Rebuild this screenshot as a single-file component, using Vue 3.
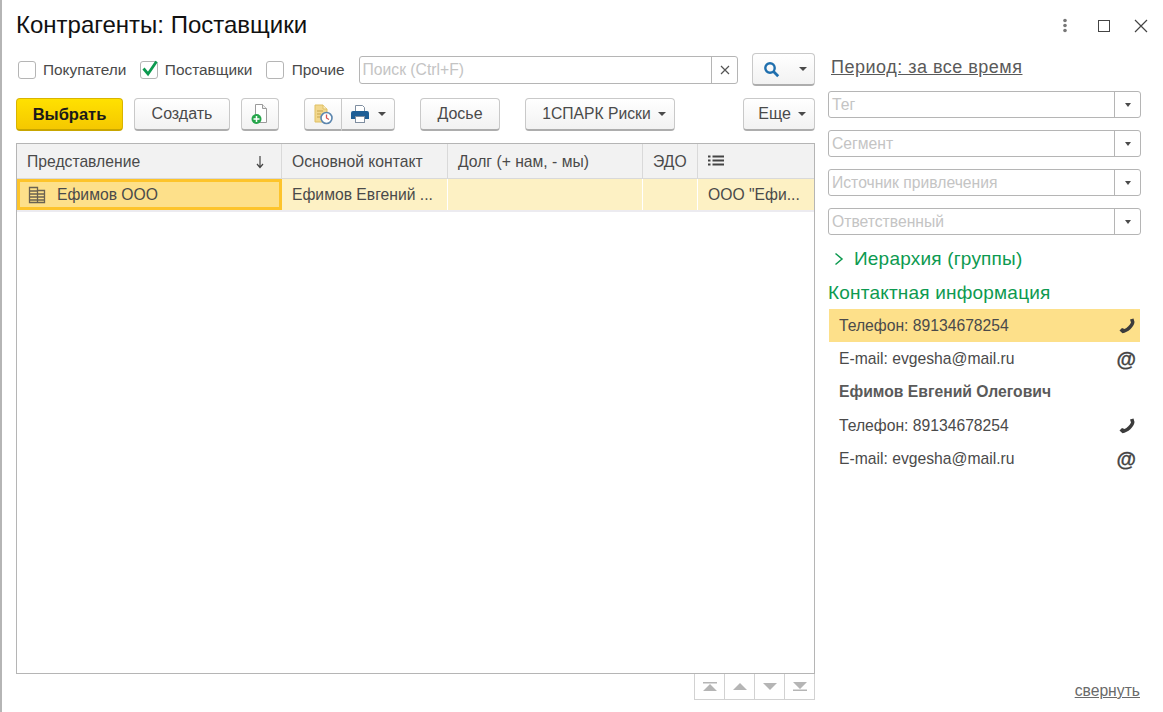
<script setup>
const columns = [
  { name: 'Основной контакт', w: 166 },
  { name: 'Долг (+ нам, - мы)', w: 195 },
  { name: 'ЭДО', w: 55 },
]
const filters = ['Тег', 'Сегмент', 'Источник привлечения', 'Ответственный']
const phonePath = 'M12 2.500L15.500 1.500L16.500 5C16 10 10 15.500 4.500 16.200L1.500 13.500L4 11L6.500 12C9 11 12 8 13 5.500Z'
</script>

<template>
  <div class="window">
    <header class="head">
      <h1 class="title">Контрагенты: Поставщики</h1>
      <div class="controls">
        <svg width="6" height="16" viewBox="0 0 6 16" class="dots"><circle cx="3" cy="2.500" r="1.800" fill="#777"/><circle cx="3" cy="7.500" r="1.800" fill="#777"/><circle cx="3" cy="12.500" r="1.800" fill="#777"/></svg>
        <svg width="12" height="12" viewBox="0 0 12 12" class="square"><rect x=".5" y=".5" width="11" height="11" fill="none" stroke="#444"/></svg>
        <svg width="14" height="14" viewBox="0 0 14 14" class="close"><path d="M1 1l12 12M13 1L1 13" stroke="#444" stroke-width="1.200" fill="none"/></svg>
      </div>
    </header>

    <div class="body">
      <main class="left">
        <div class="row-search">
          <label class="check first"><span class="box"></span>Покупатели</label>
          <label class="check second">
            <span class="box">
              <svg width="20" height="20" viewBox="0 0 20 20" class="tick"><path d="M3.500 9.500l4.500 5.500L16.500 2.500" fill="none" stroke="#0d9a50" stroke-width="2.800"/></svg>
            </span>Поставщики
          </label>
          <label class="check third"><span class="box"></span>Прочие</label>
          <div class="search">
            <span class="search-text">Поиск (Ctrl+F)</span>
            <span class="search-x">
              <svg width="10" height="10" viewBox="0 0 10 10"><path d="M1 1l8 8M9 1L1 9" stroke="#555" stroke-width="1.200"/></svg>
            </span>
          </div>
          <button class="btn search-btn">
            <svg width="17" height="17" viewBox="0 0 17 17"><circle cx="7" cy="7" r="4.700" fill="none" stroke="#1f6fae" stroke-width="2.400"/><path d="M10.500 10.500l4.700 4.700" stroke="#1f6fae" stroke-width="2.800"/></svg>
            <i class="caret"></i>
          </button>
        </div>

        <div class="row-actions">
          <button class="btn primary">Выбрать</button>
          <button class="btn create">Создать</button>
          <button class="btn icon-new">
            <svg width="20" height="22" viewBox="0 0 20 22">
              <path d="M5.500 1.500h7l4 4v14h-11z" fill="#fff" stroke="#9a9a9a"/>
              <path d="M12.500 1.500v4h4" fill="#eee" stroke="#9a9a9a"/>
              <circle cx="6.500" cy="16" r="5" fill="#26a64b"/>
              <path d="M6.500 13v6M3.500 16h6" stroke="#fff" stroke-width="1.500"/>
            </svg>
          </button>
          <div class="group">
            <button class="btn g1">
              <svg width="22" height="22" viewBox="0 0 22 22">
                <path d="M3 2h8l4 4v13H3z" fill="#f2d88e" stroke="#dfc064"/>
                <path d="M11 2v4h4" fill="#f9ecc4" stroke="#dfc064"/>
                <path d="M5 8h6M5 11h4M5 14h3" stroke="#c9a54a"/>
                <circle cx="14.500" cy="15" r="5.500" fill="#fff" stroke="#5c86ae" stroke-width="1.600"/>
                <path d="M14.500 11.500v3.500l2.500 1.500" fill="none" stroke="#d9534f" stroke-width="1.300"/>
              </svg>
            </button>
            <button class="btn g2">
              <svg width="20" height="20" viewBox="0 0 20 20">
                <path d="M5.500 1.500h7l2 2v5h-9z" fill="#fff" stroke="#7f8ea0"/>
                <path d="M1 9q0-2 2-2h14q2 0 2 2v6h-4v-3H5v3H1z" fill="#1f5f96"/>
                <rect x="5.500" y="12.500" width="9" height="6" fill="#fff" stroke="#7f8ea0"/>
              </svg>
              <i class="caret"></i>
            </button>
          </div>
          <button class="btn dossier">Досье</button>
          <button class="btn spark">1СПАРК Риски<i class="caret"></i></button>
          <button class="btn more">Еще<i class="caret"></i></button>
        </div>

        <section class="table">
          <div class="thead">
            <div class="th c-first">Представление
              <svg width="10" height="14" viewBox="0 0 10 14" class="sort"><path d="M5 1v11M2 9l3 3.500L8 9" fill="none" stroke="#444" stroke-width="1.200"/></svg>
            </div>
            <div v-for="c in columns" :key="c.name" class="th" :style="{ width: c.w + 'px' }">{{ c.name }}</div>
            <div class="th c-last">
              <svg width="16" height="12" viewBox="0 0 16 12"><path d="M0 1.500h2.500M0 5.500h2.500M0 9.500h2.500M4.500 1.500H16M4.500 5.500H16M4.500 9.500H16" stroke="#444" stroke-width="1.800"/></svg>
            </div>
          </div>
          <div class="tr">
            <div class="td c-first active">
              <svg width="18" height="18" viewBox="0 0 18 18" class="org">
                <path d="M1.500 1.500h8v15h-8zM9.500 4.500h7v12h-7z" fill="#fde08a" stroke="#6a6252" stroke-width="1.300"/>
                <path d="M1.500 5h8M1.500 8h8M1.500 11h8M1.500 14h8M9.500 8h7M9.500 11h7M9.500 14h7" stroke="#6a6252" stroke-width="1.400"/>
              </svg>
              Ефимов ООО
            </div>
            <div class="td" style="width: 166px">Ефимов Евгений ...</div>
            <div class="td" style="width: 195px"></div>
            <div class="td" style="width: 55px"></div>
            <div class="td c-last">ООО "Ефи...</div>
          </div>
          <div class="tbody-space"></div>
        </section>

        <div class="pager">
          <span class="page"><svg width="14" height="9" viewBox="0 0 14 9"><path d="M0 0h14v1.500H0zM7 2l7 7H0z" fill="#b5b5b5"/></svg></span>
          <span class="page"><svg width="14" height="7" viewBox="0 0 14 7"><path d="M7 0l7 7H0z" fill="#b5b5b5"/></svg></span>
          <span class="page"><svg width="14" height="7" viewBox="0 0 14 7"><path d="M0 0h14L7 7z" fill="#b5b5b5"/></svg></span>
          <span class="page"><svg width="14" height="9" viewBox="0 0 14 9"><path d="M0 0h14L7 7zM0 7.500h14V9H0z" fill="#b5b5b5"/></svg></span>
        </div>
      </main>

      <aside class="right">
        <a class="period">Период: за все время</a>
        <div class="filters">
          <div v-for="f in filters" :key="f" class="select">
            <span class="select-text">{{ f }}</span>
            <span class="select-btn"><i class="caret small"></i></span>
          </div>
        </div>
        <div class="hier">
          <svg width="10" height="14" viewBox="0 0 10 14"><path d="M1.500 1.500L8 7l-6.500 5.500" fill="none" stroke="#0d9a50" stroke-width="1.500"/></svg>
          <span>Иерархия (группы)</span>
        </div>
        <div class="contact-title">Контактная информация</div>
        <ul class="contacts">
          <li class="contact hl">
            <span>Телефон: 89134678254</span>
            <svg width="18" height="18" viewBox="0 0 18 18"><path :d="phonePath" fill="#3c3c3c"/></svg>
          </li>
          <li class="contact">
            <span>E-mail: evgesha@mail.ru</span>
            <span class="at">@</span>
          </li>
          <li class="contact person">Ефимов Евгений Олегович</li>
          <li class="contact">
            <span>Телефон: 89134678254</span>
            <svg width="18" height="18" viewBox="0 0 18 18"><path :d="phonePath" fill="#3c3c3c"/></svg>
          </li>
          <li class="contact">
            <span>E-mail: evgesha@mail.ru</span>
            <span class="at">@</span>
          </li>
        </ul>
        <div class="collapse-wrap"><a class="collapse">свернуть</a></div>
      </aside>
    </div>
  </div>
</template>

<style>
html, body { margin: 0; background: #fff; overflow: hidden; }
</style>

<style scoped>
.window {
  width: 1163px;
  height: 712px;
  box-sizing: border-box;
  border-left: 2px solid #b5b5b5;
  font-family: "Liberation Sans", Arial, sans-serif;
  font-size: 15.700px;
  color: #4a4a4a;
  display: flex;
  flex-direction: column;
  overflow: hidden;
}
.head {
  height: 53px;
  flex: none;
  display: flex;
  justify-content: space-between;
  align-items: flex-start;
  padding: 0 15px 0 14px;
}
.title {
  margin: 11px 0 0;
  font-size: 24px;
  line-height: 28px;
  font-weight: 400;
  color: #111;
}
.controls { display: flex; align-items: center; margin-top: 18px; }
.dots { display: block; margin-right: 30px; }
.square { display: block; margin-right: 24px; }
.close { display: block; }

.body { flex: 1; display: flex; min-height: 0; padding-left: 14px; }
.left { width: 799px; flex: none; display: flex; flex-direction: column; }
.right { width: 313px; margin-left: 13px; flex: none; display: flex; flex-direction: column; }

.row-search { display: flex; align-items: center; height: 33px; padding-left: 2px; }
.check { display: flex; align-items: center; height: 20px; white-space: nowrap; font-size: 15.400px; }
.box {
  width: 18px; height: 18px; box-sizing: border-box;
  border: 1px solid #b5b5b5; border-radius: 3px; background: #fff;
  margin-right: 7px; flex: none; position: relative;
}
.tick { position: absolute; left: -1px; top: -3px; }
.first { width: 122px; }
.second { width: 126px; }
.third { width: 93px; }
.third .box { margin-right: 8px; }
.search {
  width: 380px; height: 28px; box-sizing: border-box;
  border: 1px solid #b5b5b5; border-radius: 3px;
  display: flex; align-items: center; justify-content: space-between;
}
.search-text { color: #c4c4c4; padding: 1px 0 0 3px; }
.search-x {
  width: 25px; height: 100%; border-left: 1px solid #b5b5b5;
  display: flex; align-items: center; justify-content: center;
}

.btn {
  height: 33px; box-sizing: border-box;
  border: 1px solid #c9c9c9; border-bottom: 2px solid #adadad; border-radius: 4px;
  background: linear-gradient(#fff, #f2f2f2);
  font: inherit; font-size: 16px; color: #4a4a4a; padding: 0;
  display: flex; align-items: center; justify-content: center;
  flex: none;
}
.caret {
  display: inline-block; width: 0; height: 0;
  border-left: 4px solid transparent; border-right: 4px solid transparent;
  border-top: 4px solid #4a4a4a;
}
.caret.small { border-left-width: 3.500px; border-right-width: 3.500px; }
.search-btn { width: 63px; margin-left: 14px; justify-content: space-between; padding: 0 7px 0 10px; }

.row-actions { display: flex; margin-top: 12px; height: 33px; }
.primary {
  width: 107px; font-weight: 700; font-size: 16.500px; color: #1a1a1a;
  background: linear-gradient(#ffe100, #f5c800);
  border-color: #d9b400; border-bottom-color: #c8a600;
}
.create { width: 96px; margin-left: 11px; }
.icon-new { width: 38px; margin-left: 11px; }
.group { display: flex; margin-left: 25px; }
.g1 { width: 38px; border-radius: 4px 0 0 4px; border-right: 1px solid #c9c9c9; }
.g2 { width: 53px; border-radius: 0 4px 4px 0; border-left: 0; justify-content: space-between; padding: 0 8px 0 8px; }
.dossier { width: 80px; margin-left: 25px; }
.spark { width: 150px; margin-left: 25px; gap: 7px; padding-left: 8px; font-size: 15.700px; }
.more { width: 72px; margin-left: 68px; gap: 7px; padding-left: 6px; }

.table {
  margin-top: 12px;
  height: 531px; flex: none; box-sizing: border-box;
  border: 1px solid #b5b5b5;
  display: flex; flex-direction: column;
}
.thead { display: flex; height: 35px; background: #f2f2f2; border-bottom: 1px solid #d9d9d9; box-sizing: border-box; flex: none; }
.th {
  box-sizing: border-box; padding-left: 10px; line-height: 33px;
  border-right: 1px solid #d9d9d9; white-space: nowrap; flex: none;
  display: flex; align-items: center;
}
.c-first { width: 265px; position: relative; }
.c-last { flex: 1; border-right: 0; }
.sort { position: absolute; right: 16px; top: 11px; }
.tr { display: flex; height: 33px; box-sizing: border-box; background: #fdf1c4; border-bottom: 2px solid #ecebf0; flex: none; }
.td {
  box-sizing: border-box; padding: 1px 0 0 10px; flex: none;
  border-right: 1px solid #fff; white-space: nowrap; overflow: hidden;
  display: flex; align-items: center;
}
.td.c-last { flex: 1; border-right: 0; }
.td.active {
  width: 265px; background: #fde08a; border: 3px solid #fdc42b;
  padding: 1px 0 0 8px; gap: 11px;
}
.org { flex: none; }
.tbody-space { flex: 1; }

.pager { display: flex; justify-content: flex-end; height: 26px; }
.page {
  width: 30px; height: 26px; box-sizing: border-box; margin-left: 0;
  border: 1px solid #d2d2d2; border-top: 0; border-left: 0;
  display: flex; align-items: center; justify-content: center;
}
.page:first-child { border-left: 1px solid #d2d2d2; width: 31px; }

.period {
  margin: 3px 0 0 3px; font-size: 18px; line-height: 22px;
  text-decoration: underline; color: #5a5a5a; letter-spacing: .5px;
}
.filters { margin-top: 13px; display: flex; flex-direction: column; gap: 12px; }
.select {
  height: 27px; box-sizing: border-box;
  border: 1px solid #b5b5b5; border-radius: 3px;
  display: flex; align-items: center; justify-content: space-between;
}
.select-text { color: #c4c4c4; padding: 1px 0 0 3px; }
.select-btn {
  width: 25px; height: 100%; border-left: 1px solid #b5b5b5;
  display: flex; align-items: center; justify-content: center;
}
.hier {
  display: flex; align-items: center; margin: 12px 0 0 6px; height: 24px;
  color: #0d9a50; font-size: 19px; letter-spacing: .2px;
}
.hier span { margin-left: 10px; }
.contact-title {
  margin: 10px 0 0; height: 24px; line-height: 24px;
  color: #0d9a50; font-size: 19px; letter-spacing: .2px;
}
.contacts { list-style: none; margin: 4px 1px 0; padding: 0; }
.contact {
  height: 33px; display: flex; align-items: center; justify-content: space-between;
  padding: 0 4px 0 10px; box-sizing: border-box;
}
.hl { background: #fde08a; }
.person { font-weight: 700; color: #5a5a5a; height: 34px; }
.at { font-weight: 700; font-size: 20px; color: #444; line-height: 1; -webkit-text-stroke: .3px #444; }
.collapse-wrap { margin-top: auto; height: 31px; text-align: right; padding-right: 1px; }
.collapse { text-decoration: underline; color: #6a6a6a; line-height: 20px; }
</style>
